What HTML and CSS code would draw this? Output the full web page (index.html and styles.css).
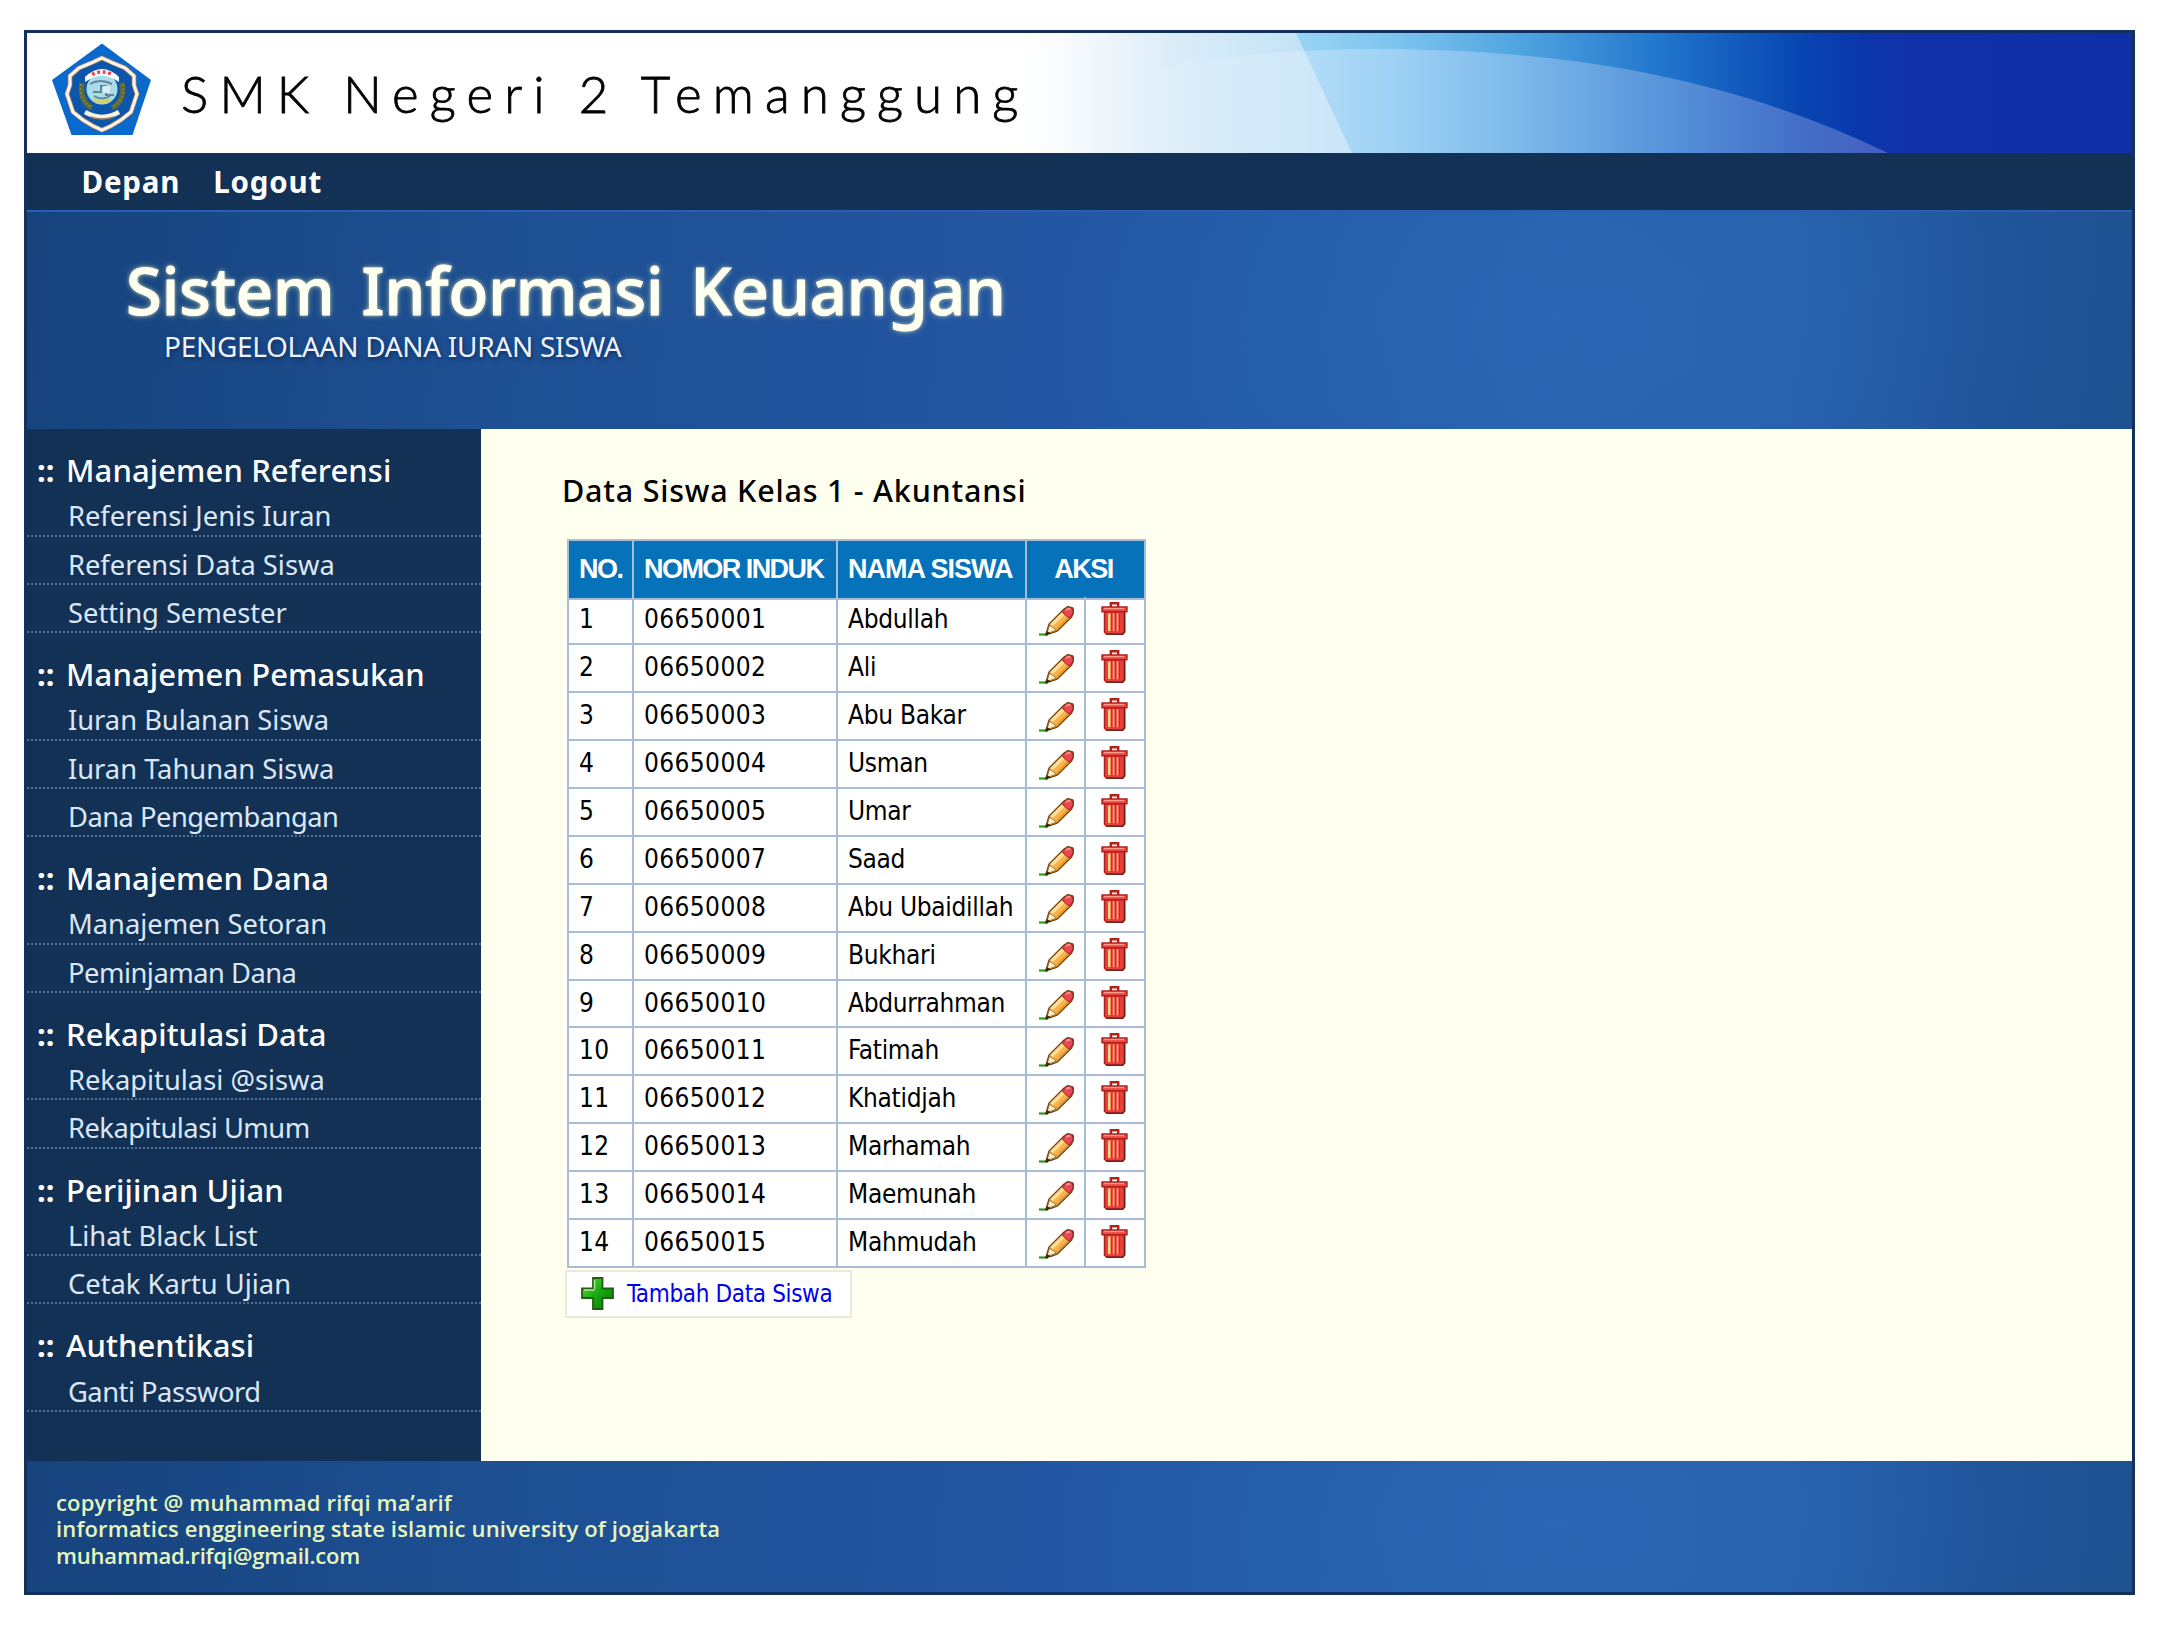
FILE: index.html
```html
<!DOCTYPE html>
<html lang="id">
<head>
<meta charset="utf-8">
<title>Sistem Informasi Keuangan - SMK Negeri 2 Temanggung</title>
<link rel="stylesheet" href="styles.css">
</head>
<body>
<svg class="defs" width="0" height="0" aria-hidden="true">
  <symbol id="pencil" viewBox="0 0 35 30">
    <path d="M0 28.500h9" stroke="#2f9a1c" stroke-width="2.200"/>
    <path d="M7 28l3-10L25 3l4-2.500 5 1.500 1 4-2.500 5L18.500 25l-7 2.500z" fill="#f9b248" stroke="#6e4616" stroke-width="1.300"/>
    <path d="M11.500 18L25 4.500l3 2L13.500 20.500z" fill="#ffdf98"/>
    <path d="M17.500 23.500L31.500 9.500" stroke="#e0922e" stroke-width="1.600"/>
    <path d="M23.500 5L28.500 1.200l4.800 1.200.9 4-3.200 5-2 0-5.500-5z" fill="#ea4850" stroke="#a3222b" stroke-width="1"/>
    <path d="M27 4l2.500-1.500 2 1" stroke="#ff9a98" stroke-width="1.500" fill="none"/>
    <path d="M10.500 19l7 5-6.500 2.500-3 .5z" fill="#fff3c8" stroke="#7c5524" stroke-width=".8"/>
    <path d="M6 29.500l2-4.500 3 2-2.500 2.300z" fill="#3a2a0c"/>
  </symbol>
  <symbol id="trash" viewBox="0 0 27 33">
    <path d="M9.800 5V1.300h7.400V5" fill="#fff" stroke="#b3201e" stroke-width="2.400"/>
    <path d="M3.500 9.500h20V30l-2 2.200h-16l-2-2.200z" fill="#ea4036" stroke="#a82020" stroke-width="1.500"/>
    <path d="M23.600 10v20l-2 2.200H6" fill="none" stroke="#6a2424" stroke-width="1.500"/>
    <path d="M8.300 11.500v17.500" stroke="#ffe08a" stroke-width="2.400"/>
    <path d="M10.700 11.500v17.500M14.500 11.500v17.500M18.500 11.500v17.500" stroke="#b8332a" stroke-width="1"/>
    <path d="M12.600 11.500v17.500M16.500 11.500v17.500" stroke="#f7a890" stroke-width="1.600"/>
    <path d="M1 5h25v4.800H1z" fill="#ee4a40" stroke="#b3201e" stroke-width="1.400"/>
    <path d="M3 6.500h20" stroke="#ff9d8c" stroke-width="1.300"/>
  </symbol>
</svg>
<div class="page">
  <header class="banner">
    <svg class="logo" viewBox="50 42 103 95">
      <path d="M102 43.500L151 80l-18.500 55h-61L52 80z" fill="#0a69cd"/>
      <path d="M102 58l11 5 12 5 9 8v9l3 9-3 9-3 9-10 8-10 6-9 4-9-4-10-6-10-8-3-9-3-9 3-9v-9l9-8 12-5z" fill="#0b56ac" stroke="#c9925c" stroke-width="4.500"/>
      <path d="M102 58l11 5 12 5 9 8v9l3 9-3 9-3 9-10 8-10 6-9 4-9-4-10-6-10-8-3-9-3-9 3-9v-9l9-8 12-5z" fill="none" stroke="#fbf5ec" stroke-width="3"/>
      <path d="M82 83q-3 18 10 25M122 83q3 18-10 25" fill="none" stroke="#5a6a3a" stroke-width="5.500"/>
      <path d="M81 84q-2 16 10 23M123 84q2 16-10 23" fill="none" stroke="#9a8238" stroke-width="1.600" stroke-dasharray="2 2"/>
      <circle cx="102" cy="89" r="15.500" fill="#a9dbe9"/>
      <path d="M90 84q10-6 22 0M93 92h8v-6h5v9h8M94 96q8 5 16 0" fill="none" stroke="#60889a" stroke-width="2"/>
      <path d="M94 99q8 6 16 0" fill="none" stroke="#d4d060" stroke-width="3"/>
      <path d="M103 86h7v7h-7z" fill="#dcecf4"/>
      <path d="M85 82v-5q17-16 34 0v5l-5-3q-12-7-24 0z" fill="#fff"/>
      <path d="M92 74.500q10-5 20 0" fill="none" stroke="#e64848" stroke-width="3.500" stroke-dasharray="3 2.500"/>
      <path d="M85 112q17 10 34 0" fill="none" stroke="#fbf1df" stroke-width="4.500"/>
      <path d="M90 117q12 4 24 0" fill="none" stroke="#8d7c5c" stroke-width="1.500"/>
    </svg>
    <div class="school">SMK Negeri 2 Temanggung</div>
    <svg class="swoosh" viewBox="1000 33 1132 120" preserveAspectRatio="none">
      <defs>
        <linearGradient id="pale" gradientUnits="userSpaceOnUse" x1="1020" y1="0" x2="1350" y2="0">
          <stop offset="0" stop-color="#fff"/><stop offset=".12" stop-color="#fafcfe"/><stop offset=".45" stop-color="#ddedf8"/><stop offset="1" stop-color="#b9e0f5"/>
        </linearGradient>
        <linearGradient id="deep" gradientUnits="userSpaceOnUse" x1="1297" y1="0" x2="2132" y2="0">
          <stop offset="0" stop-color="#98d4f3"/><stop offset=".12" stop-color="#7cc4ef"/><stop offset=".27" stop-color="#4fa3e0"/><stop offset=".44" stop-color="#2074cb"/><stop offset=".6" stop-color="#0846b2"/><stop offset=".68" stop-color="#0b36ab"/><stop offset=".75" stop-color="#1230a8"/><stop offset="1" stop-color="#102fa6"/>
        </linearGradient>
        <linearGradient id="sheen" gradientUnits="userSpaceOnUse" x1="1100" y1="0" x2="1890" y2="0">
          <stop offset="0" stop-color="#f4f4ff" stop-opacity="0"/><stop offset=".25" stop-color="#f0f4ff" stop-opacity=".3"/><stop offset="1" stop-color="#dcd8ff" stop-opacity=".27"/>
        </linearGradient>
      </defs>
      <path d="M1000 33h300l55 120h-355z" fill="url(#pale)"/>
      <path d="M1296 33h836v120h-780z" fill="url(#deep)"/>
      <path d="M1100 78Q1240 49 1375 49C1580 49 1740 82 1888 153H1100z" fill="url(#sheen)"/>
    </svg>
  </header>
  <nav class="topnav"><a>Depan</a><a>Logout</a></nav>
  <section class="hero">
    <h1>Sistem Informasi Keuangan</h1>
    <p>PENGELOLAAN DANA IURAN SISWA</p>
  </section>
  <div class="body">
    <aside class="sidebar">
      <h2><b>::</b>Manajemen Referensi</h2>
      <a>Referensi Jenis Iuran</a>
      <a>Referensi Data Siswa</a>
      <a>Setting Semester</a>
      <h2><b>::</b>Manajemen Pemasukan</h2>
      <a>Iuran Bulanan Siswa</a>
      <a>Iuran Tahunan Siswa</a>
      <a class="tight">Dana Pengembangan</a>
      <h2><b>::</b>Manajemen Dana</h2>
      <a>Manajemen Setoran</a>
      <a class="tight">Peminjaman Dana</a>
      <h2><b>::</b>Rekapitulasi Data</h2>
      <a>Rekapitulasi @siswa</a>
      <a class="tight">Rekapitulasi Umum</a>
      <h2><b>::</b>Perijinan Ujian</h2>
      <a>Lihat Black List</a>
      <a>Cetak Kartu Ujian</a>
      <h2><b>::</b>Authentikasi</h2>
      <a class="tight">Ganti Password</a>
    </aside>
    <main class="content">
      <h3>Data Siswa Kelas 1 - Akuntansi</h3>
      <table class="students">
        <thead><tr><th>NO.</th><th>NOMOR INDUK</th><th>NAMA SISWA</th><th class="aksi" colspan="2">AKSI</th></tr></thead>
        <tbody>
        <tr><td>1</td><td>06650001</td><td>Abdullah</td><td><svg class="pencil"><use href="#pencil"/></svg></td><td><svg class="trash"><use href="#trash"/></svg></td></tr>
        <tr><td>2</td><td>06650002</td><td>Ali</td><td><svg class="pencil"><use href="#pencil"/></svg></td><td><svg class="trash"><use href="#trash"/></svg></td></tr>
        <tr><td>3</td><td>06650003</td><td>Abu Bakar</td><td><svg class="pencil"><use href="#pencil"/></svg></td><td><svg class="trash"><use href="#trash"/></svg></td></tr>
        <tr><td>4</td><td>06650004</td><td>Usman</td><td><svg class="pencil"><use href="#pencil"/></svg></td><td><svg class="trash"><use href="#trash"/></svg></td></tr>
        <tr><td>5</td><td>06650005</td><td>Umar</td><td><svg class="pencil"><use href="#pencil"/></svg></td><td><svg class="trash"><use href="#trash"/></svg></td></tr>
        <tr><td>6</td><td>06650007</td><td>Saad</td><td><svg class="pencil"><use href="#pencil"/></svg></td><td><svg class="trash"><use href="#trash"/></svg></td></tr>
        <tr><td>7</td><td>06650008</td><td>Abu Ubaidillah</td><td><svg class="pencil"><use href="#pencil"/></svg></td><td><svg class="trash"><use href="#trash"/></svg></td></tr>
        <tr><td>8</td><td>06650009</td><td>Bukhari</td><td><svg class="pencil"><use href="#pencil"/></svg></td><td><svg class="trash"><use href="#trash"/></svg></td></tr>
        <tr><td>9</td><td>06650010</td><td>Abdurrahman</td><td><svg class="pencil"><use href="#pencil"/></svg></td><td><svg class="trash"><use href="#trash"/></svg></td></tr>
        <tr><td>10</td><td>06650011</td><td>Fatimah</td><td><svg class="pencil"><use href="#pencil"/></svg></td><td><svg class="trash"><use href="#trash"/></svg></td></tr>
        <tr><td>11</td><td>06650012</td><td>Khatidjah</td><td><svg class="pencil"><use href="#pencil"/></svg></td><td><svg class="trash"><use href="#trash"/></svg></td></tr>
        <tr><td>12</td><td>06650013</td><td>Marhamah</td><td><svg class="pencil"><use href="#pencil"/></svg></td><td><svg class="trash"><use href="#trash"/></svg></td></tr>
        <tr><td>13</td><td>06650014</td><td>Maemunah</td><td><svg class="pencil"><use href="#pencil"/></svg></td><td><svg class="trash"><use href="#trash"/></svg></td></tr>
        <tr><td>14</td><td>06650015</td><td>Mahmudah</td><td><svg class="pencil"><use href="#pencil"/></svg></td><td><svg class="trash"><use href="#trash"/></svg></td></tr>
        </tbody>
      </table>
      <a class="add">
        <svg class="plus" viewBox="0 0 33 33">
          <defs><linearGradient id="green" x1="0" y1="0" x2="1" y2="1"><stop offset="0" stop-color="#5fe04a"/><stop offset=".5" stop-color="#17a810"/><stop offset="1" stop-color="#067a06"/></linearGradient></defs>
          <path d="M12 1h9.500v10.500H32V21H21.500v11H12V21H1v-9.500h11z" fill="url(#green)" stroke="#285a12" stroke-width="1.800"/>
          <path d="M13.500 12V3M3 13h10.500" stroke="#a5f08c" stroke-width="1.500" fill="none"/>
        </svg>
        <span>Tambah Data Siswa</span>
      </a>
    </main>
  </div>
  <footer class="footer">
    <div>copyright @ muhammad rifqi ma’arif</div>
    <div>informatics enggineering state islamic university of jogjakarta</div>
    <div class="mail">muhammad.rifqi@gmail.com</div>
  </footer>
</div>
</body>
</html>
```
FILE: styles.css
```css
* { box-sizing: border-box; }
body {
  margin: 0;
  padding: 30px 29px 37px 24px;
  background: #fff;
  font-family: "Noto Sans", "DejaVu Sans", sans-serif;
}
h1, h2, h3, p { margin: 0; font-weight: 400; }
svg { display: block; }
.defs { position: absolute; }
.page {
  width: 2111px;
  height: 1565px;
  border: 3px solid #12315c;
  white-space: nowrap;
}

.banner { display: flex; height: 120px; background: #fff; overflow: hidden; }
.logo { flex: none; width: 103px; height: 95px; margin: 9px 0 0 23px; }
.school {
  flex: none;
  position: relative;
  z-index: 1;
  width: 900px;
  padding-left: 28px;
  font: 300 51px/122px Lato, sans-serif;
  letter-spacing: 11.1px;
  word-spacing: -2px;
  color: #000;
  -webkit-text-stroke: 0.8px #000;
}
.swoosh { flex: none; width: 1132px; height: 120px; margin-left: -53px; }

.topnav {
  display: flex;
  gap: 33px;
  height: 57px;
  padding-left: 54.5px;
  background: #123155;
  color: #fff;
  font-size: 29.5px;
  font-weight: 700;
  line-height: 57px;
  letter-spacing: 0.8px;
}

.hero, .footer {
  background:
    radial-gradient(ellipse 520px 260px at 1530px 50%, rgba(46, 108, 188, 0.4), rgba(46, 108, 188, 0)),
    linear-gradient(95deg, #17437d 0, #1d4f92 22%, #2355a1 45%, #235ba7 58%, #2863ae 72%, #2761ac 83%, #21559b 92%, #1e5190 100%);
}
.hero { height: 219px; padding: 48px 0 0 99px; border-top: 2px solid #2660b2; }
.hero h1 {
  font-size: 65px;
  font-weight: 500;
  line-height: 60px;
  letter-spacing: 0;
  word-spacing: 10px;
  color: #fffff2;
  -webkit-text-stroke: 1px #fffff2;
  text-shadow: 0 0 3px #d9e3b4, 0 0 6px rgba(205, 220, 160, 0.7);
}
.hero p {
  margin: 11px 0 0 38px;
  font-size: 28px;
  line-height: 30px;
  letter-spacing: -0.3px;
  color: #eef3ff;
  text-shadow: 1px 2px 4px #0d2c5c;
}

.body { display: flex; height: 1032px; }
.sidebar { width: 454px; background: #123155; }
.sidebar h2 {
  display: flex;
  height: 59.3px;
  padding: 30px 0 0 10px;
  font-size: 31px;
  font-weight: 500;
  line-height: 23px;
  letter-spacing: 0.1px;
  color: #fff;
}
.sidebar h2 b { width: 29px; font-weight: 700; }
.sidebar a {
  display: block;
  height: 48.25px;
  padding: 9px 0 0 41px;
  border-bottom: 2px dotted #4f719a;
  font-size: 27.3px;
  line-height: 38px;
  color: #dbe7f5;
}
.sidebar .tight { letter-spacing: -0.5px; }

.content { flex: 1; padding: 41px 0 0 81px; background: #fffff0; color: #000; }
.content h3 {
  font-size: 30.5px;
  font-weight: 500;
  line-height: 40px;
  letter-spacing: 0.77px;
}
.students {
  display: block;
  width: 579px;
  margin: 29px 0 0 5px;
  border: solid #a9bcd6;
  border-width: 2px 0 0 2px;
  background: #fff;
}
.students thead, .students tbody { display: block; }
.students tr { display: grid; grid-template-columns: 65px 204px 189px 59px 60px; height: 47.9px; }
.students thead tr { height: 56.400px; }
.students th, .students td {
  padding: 0 0 0 10px;
  border: solid #a9bcd6;
  border-width: 0 2px 2px 0;
  text-align: left;
}
.students th {
  background: #0672ba;
  color: #fff;
  font: 700 27px/57px "Liberation Sans", Arial, sans-serif;
  letter-spacing: -1.55px;
}
.students th:nth-child(3) { letter-spacing: -1px; }
.students th.aksi { grid-column: span 2; padding: 0 4px 0 0; text-align: center; }
.students td { font: 26px/45px "DejaVu Sans Condensed", "DejaVu Sans", sans-serif; letter-spacing: 0.4px; }
.students td:nth-child(3) { letter-spacing: -0.3px; }
.pencil { width: 35px; height: 30px; margin: 9px 0 0 2px; }
.trash { width: 27px; height: 33px; margin: 5px 0 0 5px; }

.add {
  display: flex;
  align-items: center;
  width: 287px;
  height: 48px;
  margin: 2px 0 0 3px;
  padding-left: 14px;
  border: 2px solid #ede9d8;
  background: #fff;
  color: #0000f0;
  font: 24px "DejaVu Sans Condensed", "DejaVu Sans", sans-serif;
  letter-spacing: -0.35px;
}
.plus { width: 33px; height: 33px; margin-right: 13px; }

.footer {
  height: 131px;
  padding: 28px 0 0 29px;
  font: 600 22px/26.400px "Open Sans", sans-serif;
  letter-spacing: 0.15px;
  color: #e6f6bc;
}
.mail { letter-spacing: -0.2px; }
```
